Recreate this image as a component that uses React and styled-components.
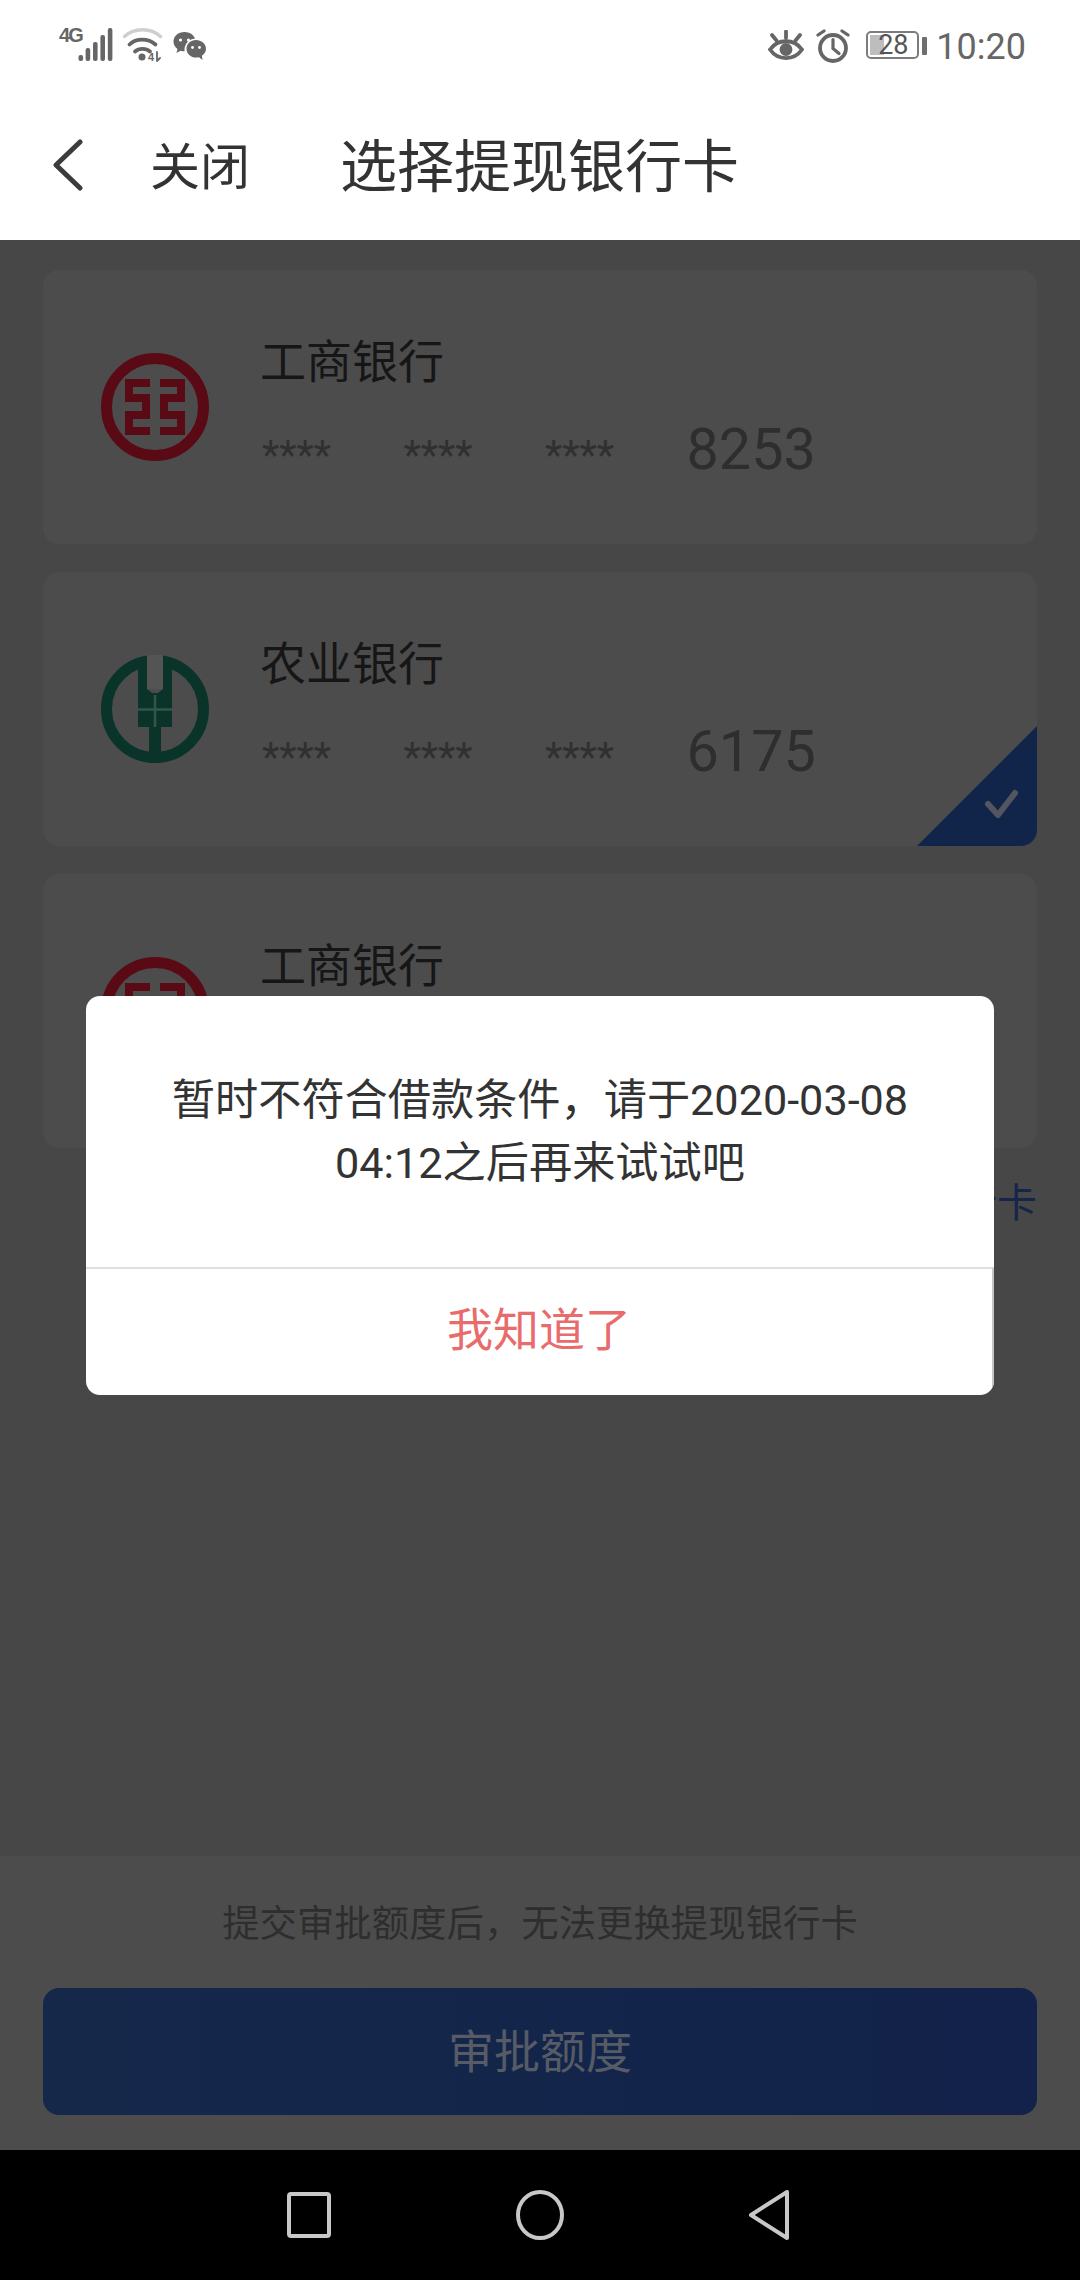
import React from "react";
import styled, { createGlobalStyle } from "styled-components";

const Global = createGlobalStyle`
  html, body { margin: 0; padding: 0; background: #474747; }
  * { box-sizing: border-box; }
  body { font-family: Roboto, "Noto Sans CJK SC", sans-serif; }
`;

const Screen = styled.div`
  position: relative;
  width: 1080px;
  height: 2280px;
  display: flex;
  flex-direction: column;
  overflow: hidden;
  background: #474747;
`;

const StatusBar = styled.div`
  height: 90px;
  background: #fff;
  display: flex;
  justify-content: space-between;
  align-items: flex-start;
  padding: 28px 54px 0 59px;
  color: #666;
`;
const StatusGroup = styled.div`
  display: flex;
  align-items: flex-start;
`;
const NetLabel = styled.span`
  font-family: "Liberation Sans", sans-serif;
  font-weight: 700;
  font-size: 20px;
  line-height: 15px;
  letter-spacing: -1.8px;
  width: 19px;
  color: #666;
`;
const Glyph = styled.svg`
  display: block;
  flex: none;
  margin-left: ${(p) => p.$ml || 0}px;
  margin-top: ${(p) => p.$mt || 0}px;
`;
const Battery = styled.div`
  position: relative;
  width: 53px;
  height: 28px;
  margin: 3px 0 0 16px;
  border: 2px solid #7c7c7c;
  border-radius: 5px;
  display: flex;
  align-items: center;
  justify-content: center;
  font-size: 27px;
  line-height: 24px;
  color: #555;
  padding-left: 2px;
`;
const BatteryFill = styled.div`
  position: absolute;
  left: 2px;
  top: 2px;
  bottom: 2px;
  width: 14px;
  background: #bdbdbd;
`;
const BatteryLevel = styled.span`
  position: relative;
`;
const BatteryNub = styled.div`
  width: 5px;
  height: 18px;
  margin: 9px 0 0 3px;
  background: #6f6f6f;
  border-radius: 1px;
`;
const Clock = styled.span`
  font-size: 36px;
  line-height: 36px;
  margin-left: 9.500px;
  margin-top: 1px;
  color: #666;
`;

const Header = styled.header`
  height: 150px;
  background: #fff;
  display: flex;
  align-items: center;
  padding: 6px 0 0 52px;
  color: #333;
`;
const CloseLabel = styled.span`
  font-size: 50px;
  line-height: 60px;
  margin-left: 64px;
`;
const Title = styled.h1`
  margin: 0 0 0 90px;
  font-size: 57px;
  font-weight: 400;
  line-height: 70px;
`;

const Main = styled.main`
  flex: 1;
  padding: 30px 43px 0;
  display: flex;
  flex-direction: column;
  gap: 28px;
`;
const Card = styled.section`
  position: relative;
  height: 274px;
  border-radius: 16px;
  background: #4c4c4c;
  display: flex;
  align-items: center;
  padding-left: 58px;
  overflow: hidden;
`;
const CardBody = styled.div`
  margin-left: 53px;
  display: flex;
  flex-direction: column;
  height: 100%;
  padding-top: 60px;
`;
const BankName = styled.div`
  font-size: 46px;
  line-height: 64px;
  margin-left: -2px;
  color: #161616;
`;
const CardNumber = styled.div`
  display: flex;
  align-items: baseline;
  gap: 72.500px;
  margin-top: 24px;
  line-height: 64px;
`;
const Mask = styled.span`
  font-size: 40px;
  color: #303030;
  width: 69px;
`;
const Tail = styled.span`
  font-size: 57.500px;
  color: #2e2e2e;
`;
const Corner = styled.div`
  position: absolute;
  right: 0;
  bottom: 0;
  width: 120px;
  height: 120px;
  background: #11244a;
  clip-path: polygon(100% 0, 100% 100%, 0 100%);
`;
const AddCard = styled.div`
  text-align: right;
  font-size: 40px;
  line-height: 56px;
  color: #15264a;
`;

const Footer = styled.footer`
  height: 294px;
  background: #4c4c4c;
  padding: 0 43px;
  display: flex;
  flex-direction: column;
`;
const Notice = styled.div`
  height: 132px;
  display: flex;
  align-items: center;
  justify-content: center;
  font-size: 37.400px;
  padding-bottom: 2px;
  color: #2e2e2e;
`;
const Submit = styled.div`
  height: 127px;
  border-radius: 16px;
  background: linear-gradient(90deg, #15284a, #12224a);
  color: #565b66;
  font-size: 46px;
  display: flex;
  align-items: center;
  justify-content: center;
  padding-bottom: 7px;
`;

const NavBar = styled.nav`
  height: 130px;
  background: #000;
  display: flex;
  align-items: center;
  justify-content: center;
  gap: 185px;
  padding-right: 5px;
`;

const Modal = styled.div`
  position: absolute;
  left: 86px;
  top: 996px;
  width: 908px;
  height: 399px;
  background: #fff;
  border-radius: 14px;
  display: flex;
  flex-direction: column;
  overflow: hidden;
`;
const ModalText = styled.div`
  height: 271px;
  display: flex;
  flex-direction: column;
  align-items: center;
  justify-content: center;
  font-size: 43.200px;
  line-height: 63px;
  color: #333;
`;
const ModalAction = styled.div`
  flex: 1;
  border-top: 2px solid #dedede;
  border-right: 2px solid #c6c6c6;
  display: flex;
  align-items: center;
  justify-content: center;
  font-size: 46px;
  color: #e96c6c;
  padding-bottom: 13px;
`;

const CheckOverlay = styled.svg`
  position: absolute;
  right: 14px;
  bottom: 23px;
  display: block;
`;

const SignalIcon = () => (
  <Glyph width="36" height="33" viewBox="0 0 36 33" fill="#666">
    <rect x="0.5" y="27" width="4.6" height="6" rx="2" />
    <rect x="7.6" y="20" width="4.6" height="13" rx="2" />
    <rect x="15" y="14" width="4.6" height="19" rx="2" />
    <rect x="22.4" y="7" width="4.6" height="26" rx="2" />
    <rect x="29.8" y="0" width="4.6" height="33" rx="2" />
  </Glyph>
);

const WifiIcon = () => (
  <Glyph $ml={9} width="41" height="34" viewBox="0 0 41 34" fill="none" strokeLinecap="round">
    <path d="M1.500 8.500C11 -0.500 28 -0.500 37.500 8.500" stroke="#cfcfcf" strokeWidth="3.400" />
    <path d="M6.500 16.500C13 10 25 10 32.500 16.500" stroke="#666" strokeWidth="3.800" />
    <path d="M12 23.500C16 20 23 20 27 23.500" stroke="#666" strokeWidth="3.800" />
    <circle cx="19" cy="29" r="3.500" fill="#666" />
    <text x="25" y="33" fontSize="11" fontWeight="700" fontFamily="Liberation Sans" fill="#666">4</text>
    <path d="M34 24V33M34 33l3-3" stroke="#666" strokeWidth="1.800" />
  </Glyph>
);

const WechatIcon = () => (
  <Glyph $ml={9} $mt={4} width="34" height="29" viewBox="0 0 34 29">
    <path d="M11.500 0C5.200 0 .5 4.200.5 9.600c0 3.100 1.600 5.600 4 7.400L3.500 21l4-2.300c1.300.4 2.600.6 4 .6 6.300 0 11-4.300 11-9.700S17.800 0 11.500 0z" fill="#666" />
    <circle cx="23" cy="18" r="11.500" fill="#fff" />
    <path d="M23 8c-5.300 0-9.500 3.700-9.500 8.800s4.200 8.800 9.500 8.800c1 0 2-.1 3-.4l3.500 2.800-.6-4.300c2.600-1.600 4.100-4 4.100-6.900C33 11.700 28.300 8 23 8z" fill="#666" />
    <circle cx="7.500" cy="8" r="1.600" fill="#fff" />
    <circle cx="15.500" cy="8" r="1.600" fill="#fff" />
    <circle cx="19.500" cy="15.500" r="1.400" fill="#fff" />
    <circle cx="26.500" cy="15.500" r="1.400" fill="#fff" />
  </Glyph>
);

const EyeIcon = () => (
  <Glyph $mt={2} width="36" height="32" viewBox="0 0 36 32" fill="none" stroke="#666" strokeWidth="3.800" strokeLinecap="round">
    <path d="M2 19.500C10 8.500 26 8.500 34 19.500C26 31 10 31 2 19.500Z" />
    <circle cx="18" cy="19.500" r="6.400" fill="#666" stroke="none" />
    <path d="M18 1.500V8M4 5l4.500 5.500M32 5l-4.500 5.500" />
  </Glyph>
);

const AlarmIcon = () => (
  <Glyph $ml={12} $mt={1} width="34" height="34" viewBox="0 0 34 34" fill="none" stroke="#666" strokeLinecap="round">
    <circle cx="17" cy="19" r="13" strokeWidth="3.800" />
    <path d="M17 10.500V19.500L23 24.500" strokeWidth="3.200" />
    <path d="M2 6l6-4M32 6l-6-4" strokeWidth="3.200" />
  </Glyph>
);

const BackIcon = () => (
  <Glyph $mt={-6} width="34" height="52" viewBox="0 0 34 52" fill="none" stroke="#3c3c3c" strokeWidth="5" strokeLinecap="round" strokeLinejoin="round">
    <path d="M28 3L4 26L28 49" />
  </Glyph>
);

const IcbcLogo = () => (
  <Glyph width="108" height="108" viewBox="0 0 108 108" fill="none" stroke="#5a0a14">
    <circle cx="54" cy="54" r="48.500" strokeWidth="11" />
    <path d="M49 30H28V45H45V62H28V78H49" strokeWidth="8" />
    <path d="M59 30H80V45H63V62H80V78H59" strokeWidth="8" />
  </Glyph>
);

const AbcLogo = () => (
  <Glyph width="108" height="108" viewBox="0 0 108 108" fill="none">
    <circle cx="54" cy="54" r="48.500" stroke="#0a3429" strokeWidth="11" />
    <path d="M37 4H46V34L51 38H57L62 34V4H71V72H60V108H48V72H37Z" fill="#0a3429" />
    <rect x="46" y="0" width="16" height="34" fill="#545454" />
    <path d="M37 54.500H71M54 40V72" stroke="#35544a" strokeWidth="2.500" />
  </Glyph>
);

const CheckIcon = () => (
  <CheckOverlay width="40" height="36" viewBox="0 0 40 36" fill="none" stroke="#53565f" strokeWidth="6" strokeLinecap="round" strokeLinejoin="round">
    <path d="M5 17L15 28L32 6" />
  </CheckOverlay>
);

const BankCard = ({ logo, name, tail, selected }) => (
  <Card>
    {logo}
    <CardBody>
      <BankName>{name}</BankName>
      <CardNumber>
        <Mask>****</Mask>
        <Mask>****</Mask>
        <Mask>****</Mask>
        <Tail>{tail}</Tail>
      </CardNumber>
    </CardBody>
    {selected && <Corner />}
    {selected && <CheckIcon />}
  </Card>
);

export default function App() {
  return (
    <Screen>
      <Global />
      <StatusBar>
        <StatusGroup>
          <NetLabel>4G</NetLabel>
          <SignalIcon />
          <WifiIcon />
          <WechatIcon />
        </StatusGroup>
        <StatusGroup>
          <EyeIcon />
          <AlarmIcon />
          <Battery>
            <BatteryFill />
            <BatteryLevel>28</BatteryLevel>
          </Battery>
          <BatteryNub />
          <Clock>10:20</Clock>
        </StatusGroup>
      </StatusBar>
      <Header>
        <BackIcon />
        <CloseLabel>关闭</CloseLabel>
        <Title>选择提现银行卡</Title>
      </Header>
      <Main>
        <BankCard logo={<IcbcLogo />} name="工商银行" tail="8253" />
        <BankCard logo={<AbcLogo />} name="农业银行" tail="6175" selected />
        <BankCard logo={<IcbcLogo />} name="工商银行" tail="8253" />
        <AddCard>添加银行卡</AddCard>
      </Main>
      <Footer>
        <Notice>提交审批额度后，无法更换提现银行卡</Notice>
        <Submit>审批额度</Submit>
      </Footer>
      <NavBar>
        <Glyph width="44" height="46" viewBox="0 0 44 46" fill="none" stroke="#c8c8c8" strokeWidth="4" strokeLinejoin="round">
          <rect x="2" y="2" width="40" height="42" rx="2" />
        </Glyph>
        <Glyph width="48" height="50" viewBox="0 0 48 50" fill="none" stroke="#c8c8c8" strokeWidth="4">
          <ellipse cx="24" cy="25" rx="22" ry="23" />
        </Glyph>
        <Glyph width="40" height="50" viewBox="0 0 40 50" fill="none" stroke="#c8c8c8" strokeWidth="4" strokeLinejoin="round">
          <path d="M38 2V48L2 25Z" />
        </Glyph>
      </NavBar>
      <Modal>
        <ModalText>
          <div>暂时不符合借款条件，请于2020-03-08</div>
          <div>04:12之后再来试试吧</div>
        </ModalText>
        <ModalAction>我知道了</ModalAction>
      </Modal>
    </Screen>
  );
}
